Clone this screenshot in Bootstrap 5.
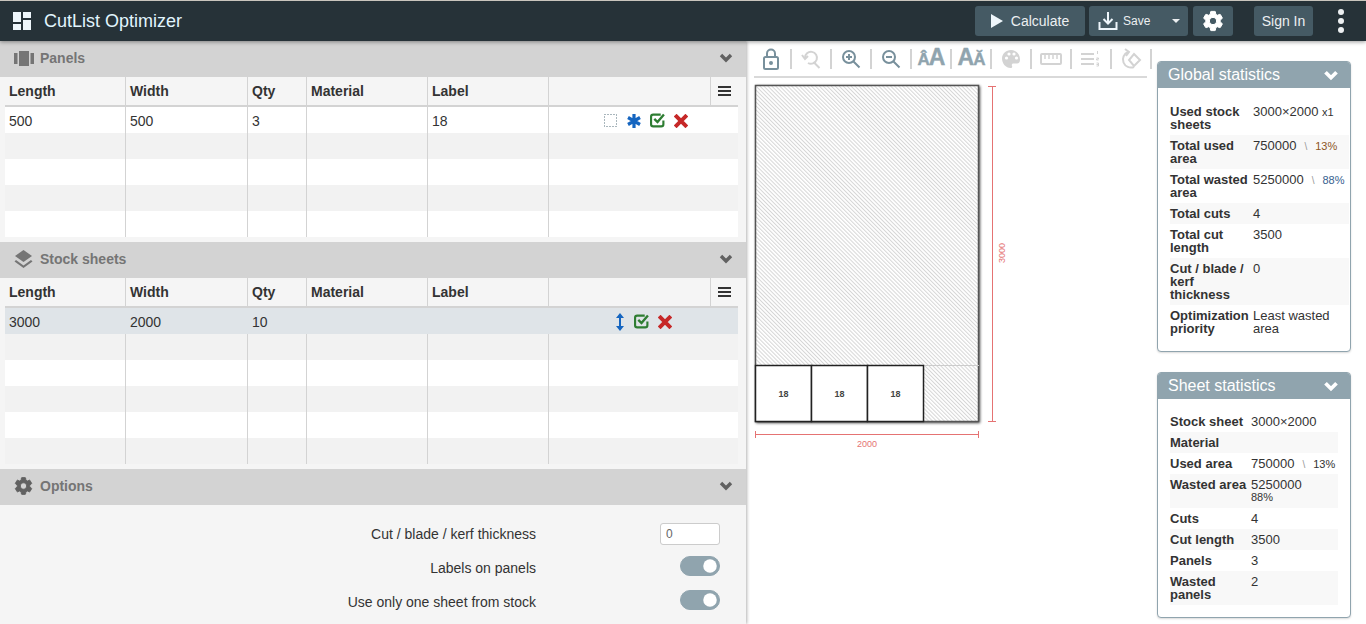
<!DOCTYPE html>
<html>
<head>
  <meta charset="UTF-8">
  <title>CutList Optimizer</title>
  <link rel="stylesheet" href="https://cdn.jsdelivr.net/npm/bootstrap@5.3.3/dist/css/bootstrap.min.css">
  <style>
    html, body { height: 624px; overflow: hidden; }
    body { font-family: "Liberation Sans", Arial, sans-serif; color: #333; background: #fff; font-size: 14px; }
    .top-bar { height: 41px; padding: 0; background: #263238; border-top: 1px solid #c9c5bd; flex-wrap: nowrap; position: relative; z-index: 3; box-shadow: 0 1px 4px rgba(0,0,0,.4); }
    .brand-name { font-size: 18px; color: #e1f5fe; margin-left: 13px; }
    .logo-mark { margin-left: 13px; }
    .bar-btn { background: #455a64; color: #eceff1; border: 0; border-radius: 3px; height: 30px; padding: 0; font-size: 14px; display: flex; align-items: center; justify-content: center; }
    .bar-btn:hover { background: #455a64; color: #eceff1; }
    .calc-btn { width: 110px; gap: 8px; }
    .save-btn { width: 99px; margin-left: 4px; justify-content: flex-start; padding-left: 9px; font-size: 12px; gap: 5px; }
    .save-btn .save-caret { width: 0; height: 0; border-left: 4px solid transparent; border-right: 4px solid transparent; border-top: 4px solid #eceff1; margin-left: 17px; }
    .gear-btn { width: 40px; margin-left: 5px; }
    .sign-btn { width: 59px; margin-left: 21px; }
    .kebab-btn { width: 8px; margin-left: 25px; margin-right: 20px; display: flex; flex-direction: column; gap: 3px; }
    .kebab-btn i { width: 6px; height: 6px; border-radius: 50%; background: #eceff1; display: block; }
    .work-area { height: 583px; }
    .left-pane { width: 746px; flex: none; background: #f5f5f5; box-shadow: 1px 0 3px rgba(0,0,0,.3); position: relative; z-index: 2; }
    .sect-head { height: 36px; background: #d3d3d3; color: #757575; font-weight: 700; font-size: 14px; padding: 0 13px 2px 13px; gap: 6px; }
    .sect-head .head-ico { width: 21px; display: flex; justify-content: center; }
    .sect-gap { height: 5px; }
    .cut-grid { width: 733px; margin: 0 0 0 5px; table-layout: fixed; font-size: 14px; border-collapse: separate; border-spacing: 0; --bs-table-bg: transparent; }
    .cut-grid.table > :not(caption) > * > * { padding: 1px 4px 0; height: 26px; border-bottom: 0; border-right: 1px solid #d3d3d3; color: #333; vertical-align: middle; box-shadow: none; background: transparent; line-height: 16px; }
    .cut-grid.table > :not(caption) > * > *:last-child { border-right: 0; }
    .cut-grid.table > thead > tr > th { height: 30px; padding: 0 4px; border-bottom: 2px solid #d3d3d3; background: #f5f5f5; }
    .cut-grid.table > tbody > tr:nth-child(odd) > td { background: #fff; }
    .cut-grid.table > tbody > tr:nth-child(even) > td { background: #f2f2f2; }
    .cut-grid.table > tbody > tr.row-active > td { background: #dfe4e8; border-right-color: #dfe4e8; }
    .cut-grid.table > thead { border: 0; }
    .cut-grid tbody { border-top: 0 !important; }
    .row-acts { gap: 9px; height: 16px; }
    .menu-lines { display: block; margin: 0 auto; }
    .opt-list { padding-top: 12px; }
    .opt-line { height: 34px; font-size: 14px; color: #333; }
    .opt-label { width: 536px; text-align: right; flex: none; }
    .opt-ctrl { width: 184px; flex: none; display: flex; justify-content: flex-end; }
    .kerf-input { width: 60px; height: 22px; padding: 0 5px; border: 1px solid #ccc; border-radius: 3px; font-size: 12px; color: #666; }
    .form-switch .form-check-input.opt-toggle { width: 40px; height: 20px; margin: 0 0 4px 0; float: none; background-color: #90a4ae; border-color: #90a4ae; }
    .mid-pane { width: 411px; flex: none; }
    .tool-strip { height: 35px; margin-left: 6px; padding-top: 5px; }
    .tool-cell { width: 38px; height: 19px; margin-top: 3px; display: flex; align-items: center; justify-content: center; }
    .tool-sep { width: 2px; height: 20px; margin-top: 3px; background: #d3d3d3; flex: none; }
    .aa-ico { color: #90a4ae; font-weight: 700; font-size: 23px; line-height: 19px; white-space: nowrap; letter-spacing: -1px; -webkit-text-stroke: .4px #90a4ae; }
    .aa-ico small { font-size: 17px; font-weight: 700; }
    .tool-rule { height: 2px; background: #d9d9d9; margin: 0 10px 0 8px; }
    .sheet-view { display: block; }
    .stats-col { width: 194px; flex: none; padding-top: 20px; gap: 20px; }
    .stat-card { border: 1px solid #90a4ae; border-radius: 4px; box-shadow: 0 1px 2px rgba(0,0,0,.15); }
    .stat-card .card-header { height: 26px; padding: 0 11px 0 10px; background: #90a4ae; color: #fff; font-size: 16px; border: 0; border-radius: 3px 3px 0 0; }
    .stat-card .card-body { padding: 13px 0 12px 12px; }
    .stat-card .card-body.slim-body { padding-top: 12px; }
    .stat-grid { font-size: 13px; line-height: 13px; table-layout: fixed; margin: 0; --bs-table-bg: transparent; }
    .stat-grid.table > :not(caption) > * > * { padding: 4px 0; border: 0; box-shadow: none; color: #333; background: transparent; vertical-align: top; }
    .stat-grid.table > tbody > tr:nth-child(even) > * { background: #f8f8f8; }
    .stat-grid th { font-weight: 700; }
    .grid-wide { width: 179px; }
    .grid-slim { width: 168px; }
    .tiny-val { font-size: 11px; line-height: 1; }
    .stack-val { display: block; line-height: 13px; }
    .slash-mark { color: #999; font-size: 10px; line-height: 1; margin: 0 8px 0 8px; }
    .used-pct { color: #8d5524; }
    .waste-pct { color: #37618f; }
  </style>
</head>
<body>
  <svg width="0" height="0" class="position-absolute">
    <symbol id="gear" viewBox="0 0 24 24"><path d="M19.14 12.94c.04-.3.06-.61.06-.94 0-.32-.02-.64-.07-.94l2.03-1.58c.18-.14.23-.41.12-.61l-1.92-3.32c-.12-.22-.37-.29-.59-.22l-2.39.96c-.5-.38-1.03-.7-1.62-.94l-.36-2.54c-.04-.24-.24-.41-.48-.41h-3.84c-.24 0-.43.17-.47.41l-.36 2.54c-.59.24-1.13.57-1.62.94l-2.39-.96c-.22-.08-.47 0-.59.22L2.74 8.87c-.12.21-.08.47.12.61l2.03 1.58c-.05.3-.09.63-.09.94s.02.64.07.94l-2.03 1.58c-.18.14-.23.41-.12.61l1.92 3.32c.12.22.37.29.59.22l2.39-.96c.5.38 1.03.7 1.62.94l.36 2.54c.05.24.24.41.48.41h3.84c.24 0 .44-.17.47-.41l.36-2.54c.59-.24 1.13-.56 1.62-.94l2.39.96c.22.08.47 0 .59-.22l1.92-3.32c.12-.22.07-.47-.12-.61l-2.01-1.58zM12 15.6c-1.98 0-3.6-1.62-3.6-3.6s1.62-3.6 3.6-3.6 3.6 1.62 3.6 3.6-1.62 3.6-3.6 3.6z" fill="currentColor" stroke="currentColor" stroke-width="1"/></symbol>
    <symbol id="chev" viewBox="0 0 14 10"><path d="M2 2l5 5 5-5" fill="none" stroke="currentColor" stroke-width="3.4"/></symbol>
    <symbol id="ok" viewBox="1 2 14 13"><path d="M13.5 8.500V12a2 2 0 0 1-2 2H4a2 2 0 0 1-2-2V5a2 2 0 0 1 2-2h7" fill="none" stroke="#2e7d32" stroke-width="2"/><path d="M5 7l3 3 6-7" fill="none" stroke="#2e7d32" stroke-width="2.2"/></symbol>
    <symbol id="del" viewBox="1 1 12 12"><path d="M2 2l10 10M12 2L2 12" fill="none" stroke="#c62828" stroke-width="3.4"/></symbol>
    <symbol id="lines" viewBox="0 0 13 10"><path d="M0 1h13M0 5h13M0 9h13" stroke="#333" stroke-width="2"/></symbol>
  </svg>

  <nav class="navbar top-bar d-flex align-items-center justify-content-start">
    <svg class="logo-mark" width="18" height="18" viewBox="0 0 18 18"><path d="M0 0h8v10H0zM0 12h8v6H0zM10 0h8v6h-8zM10 8h8v10h-8z" fill="#eef6fb"/></svg>
    <span class="brand-name">CutList Optimizer</span>
    <div class="d-flex align-items-center ms-auto">
      <button class="btn bar-btn calc-btn"><svg width="12" height="14" viewBox="0 0 12 14"><path d="M0 0l12 7-12 7z" fill="#eef6fb"/></svg>Calculate</button>
      <button class="btn bar-btn save-btn"><svg width="20" height="20" viewBox="0 0 20 20"><path d="M1.5 11v7h17v-7" fill="none" stroke="#eef6fb" stroke-width="2"/><path d="M10 1v11M5.5 8l4.500 4.500L14.500 8" fill="none" stroke="#eef6fb" stroke-width="2"/></svg>Save<span class="save-caret"></span></button>
      <button class="btn bar-btn gear-btn"><svg width="24" height="24" style="color:#fff"><use href="#gear"/></svg></button>
      <button class="btn bar-btn sign-btn">Sign In</button>
      <div class="kebab-btn"><i></i><i></i><i></i></div>
    </div>
  </nav>

  <div class="d-flex work-area">
    <div class="left-pane">
      <div class="sect-head d-flex align-items-center">
        <span class="head-ico"><svg width="20" height="15" viewBox="0 0 20 15"><path d="M0 2h3.500v11H0zM5 0h10v15H5zM16.500 2H20v11h-3.500z" fill="#757575"/></svg></span>
        <span>Panels</span>
        <svg class="ms-auto" width="14" height="10" style="color:#616161"><use href="#chev"/></svg>
      </div>
      <table class="table cut-grid">
        <colgroup><col style="width:121px"><col style="width:122px"><col style="width:59px"><col style="width:121px"><col style="width:121px"><col style="width:162px"><col style="width:27px"></colgroup>
        <thead><tr><th>Length</th><th>Width</th><th>Qty</th><th>Material</th><th>Label</th><th></th><th><svg class="menu-lines" width="13" height="10"><use href="#lines"/></svg></th></tr></thead>
        <tbody>
          <tr><td>500</td><td>500</td><td>3</td><td></td><td>18</td><td colspan="2">
            <div class="d-flex justify-content-center align-items-center row-acts ps-1">
              <svg width="14" height="14" viewBox="0 0 14 14"><rect x=".5" y=".5" width="12" height="12" fill="none" stroke="#546e7a" stroke-dasharray="1 2"/></svg>
              <svg width="14" height="14" viewBox="0 0 14 14"><path d="M7 0v14M1 3.500l12 7M13 3.500L1 10.500" stroke="#1565c0" stroke-width="3.200"/></svg>
              <svg width="15" height="15"><use href="#ok"/></svg>
              <svg width="14" height="14"><use href="#del"/></svg>
            </div></td></tr>
          <tr><td></td><td></td><td></td><td></td><td></td><td colspan="2"></td></tr>
          <tr><td></td><td></td><td></td><td></td><td></td><td colspan="2"></td></tr>
          <tr><td></td><td></td><td></td><td></td><td></td><td colspan="2"></td></tr>
          <tr><td></td><td></td><td></td><td></td><td></td><td colspan="2"></td></tr>
        </tbody>
      </table>
      <div class="sect-gap"></div>

      <div class="sect-head d-flex align-items-center">
        <span class="head-ico"><svg width="19" height="19" viewBox="0 0 19 19"><path d="M9.500 0l8.500 6-8.500 6L1 6z" fill="#757575"/><path d="M2 10l7.500 5.500L17 10l1.500 1.500-9 6.500-9-6.500z" fill="#757575"/></svg></span>
        <span>Stock sheets</span>
        <svg class="ms-auto" width="14" height="10" style="color:#616161"><use href="#chev"/></svg>
      </div>
      <table class="table cut-grid">
        <colgroup><col style="width:121px"><col style="width:122px"><col style="width:59px"><col style="width:121px"><col style="width:121px"><col style="width:162px"><col style="width:27px"></colgroup>
        <thead><tr><th>Length</th><th>Width</th><th>Qty</th><th>Material</th><th>Label</th><th></th><th><svg class="menu-lines" width="13" height="10"><use href="#lines"/></svg></th></tr></thead>
        <tbody>
          <tr class="row-active"><td>3000</td><td>2000</td><td>10</td><td></td><td></td><td colspan="2">
            <div class="d-flex justify-content-center align-items-center row-acts">
              <svg width="10" height="18" viewBox="0 0 10 18"><path d="M5 3v12" stroke="#1565c0" stroke-width="2"/><path d="M5 0l4 5H1zM5 18l4-5H1z" fill="#1565c0"/></svg>
              <svg width="15" height="15"><use href="#ok"/></svg>
              <svg width="14" height="14"><use href="#del"/></svg>
            </div></td></tr>
          <tr><td></td><td></td><td></td><td></td><td></td><td colspan="2"></td></tr>
          <tr><td></td><td></td><td></td><td></td><td></td><td colspan="2"></td></tr>
          <tr><td></td><td></td><td></td><td></td><td></td><td colspan="2"></td></tr>
          <tr><td></td><td></td><td></td><td></td><td></td><td colspan="2"></td></tr>
          <tr><td></td><td></td><td></td><td></td><td></td><td colspan="2"></td></tr>
        </tbody>
      </table>
      <div class="sect-gap"></div>

      <div class="sect-head d-flex align-items-center">
        <span class="head-ico"><svg width="24" height="24" style="color:#616161"><use href="#gear"/></svg></span>
        <span>Options</span>
        <svg class="ms-auto" width="14" height="10" style="color:#616161"><use href="#chev"/></svg>
      </div>
      <div class="opt-list">
        <div class="opt-line d-flex align-items-center"><span class="opt-label">Cut / blade / kerf thickness</span><span class="opt-ctrl"><input class="form-control kerf-input" type="text" value="0"></span></div>
        <div class="opt-line d-flex align-items-center"><span class="opt-label">Labels on panels</span><span class="opt-ctrl form-switch p-0"><input class="form-check-input opt-toggle" type="checkbox" role="switch" checked></span></div>
        <div class="opt-line d-flex align-items-center"><span class="opt-label">Use only one sheet from stock</span><span class="opt-ctrl form-switch p-0"><input class="form-check-input opt-toggle" type="checkbox" role="switch" checked></span></div>
      </div>
    </div>

    <div class="mid-pane">
      <div class="tool-strip d-flex">
        <div class="tool-cell"><svg width="18" height="22" viewBox="0 0 18 22" fill="none" stroke="#78909c" stroke-width="2"><rect x="2" y="9" width="14" height="12" rx="1.500"/><path d="M5 9V5.500a4 4 0 0 1 8 0V9"/><circle cx="9" cy="15" r="1" fill="#78909c"/></svg></div>
        <span class="tool-sep"></span>
        <div class="tool-cell"><svg width="20" height="20" viewBox="0 0 20 20" fill="none" stroke="#d3d3d3" stroke-width="2"><path d="M4 9a6 6 0 1 1 3 5"/><path d="M12.500 13l6 6"/><path d="M1 6l3 4 3-3"/></svg></div>
        <span class="tool-sep"></span>
        <div class="tool-cell"><svg width="20" height="20" viewBox="0 0 20 20" fill="none" stroke="#78909c" stroke-width="2"><circle cx="8" cy="8" r="6"/><path d="M12.500 12.500l6 6M5 8h6M8 5v6"/></svg></div>
        <span class="tool-sep"></span>
        <div class="tool-cell"><svg width="20" height="20" viewBox="0 0 20 20" fill="none" stroke="#78909c" stroke-width="2"><circle cx="8" cy="8" r="6"/><path d="M12.500 12.500l6 6M5 8h6"/></svg></div>
        <span class="tool-sep"></span>
        <div class="tool-cell"><span class="aa-ico"><small>Â</small>A</span></div>
        <span class="tool-sep"></span>
        <div class="tool-cell"><span class="aa-ico">A<small>Ă</small></span></div>
        <span class="tool-sep"></span>
        <div class="tool-cell"><svg width="20" height="20" viewBox="0 0 20 20"><path d="M10 1C5 1 1 4.800 1 9.500 1 14.500 5 19 9.500 19c1.500 0 2-1 1.500-2-.6-1.300 0-2.500 1.500-2.500H16c2 0 3-1.500 3-4C19 5 15 1 10 1z" fill="#d3d3d3"/><circle cx="5.500" cy="9" r="1.600" fill="#fff"/><circle cx="8" cy="5" r="1.600" fill="#fff"/><circle cx="13" cy="5" r="1.600" fill="#fff"/><circle cx="15.500" cy="9" r="1.600" fill="#fff"/></svg></div>
        <span class="tool-sep"></span>
        <div class="tool-cell"><svg width="22" height="12" viewBox="0 0 22 12" fill="none" stroke="#d3d3d3" stroke-width="2"><rect x="1" y="1" width="20" height="10" rx="1"/><path d="M5 2v4M9 2v4M13 2v4M17 2v4" stroke-width="1.500"/></svg></div>
        <span class="tool-sep"></span>
        <div class="tool-cell"><svg width="20" height="18" viewBox="0 0 20 18" fill="none" stroke="#d3d3d3"><path d="M0 4h13M0 9h13M0 14h13" stroke-width="2"/><path d="M16.500 1v3M15.500 8h2v1h-2v1h2M15.500 13h2v3h-2M15.500 14.500h2"/></svg></div>
        <span class="tool-sep"></span>
        <div class="tool-cell"><svg width="22" height="22" viewBox="0 0 22 22" fill="none" stroke="#d3d3d3" stroke-width="2"><path d="M8 4a8 8 0 1 0 6 15"/><path d="M5 1l4 3-3 4"/><path d="M14 7l6 6-6 6-5-6z" transform="translate(0 -1)"/></svg></div>
        <span class="tool-sep"></span>
      </div>
      <div class="tool-rule"></div>
      <svg class="sheet-view" width="300" height="380" viewBox="746 78 300 380">
        <defs>
          <pattern id="hatch" width="2.800" height="2.800" patternUnits="userSpaceOnUse" patternTransform="rotate(-45)"><rect width="2.800" height="2.800" fill="#fff"/><rect width="1" height="2.800" fill="#d6d6d6"/></pattern>
          <filter id="soft" x="-6%" y="-6%" width="112%" height="112%"><feGaussianBlur stdDeviation="1.800"/></filter>
        </defs>
        <rect x="756" y="86" width="224" height="337" fill="#000" opacity=".75" filter="url(#soft)"/>
        <rect x="755.500" y="85.500" width="223" height="336" fill="url(#hatch)" stroke="#555" stroke-width="1.500"/>
        <path d="M923 365.500h56" stroke="#ccc" stroke-width="1"/>
        <g fill="#fff" stroke="#222" stroke-width="1.500">
          <rect x="755.500" y="365.500" width="56" height="56"/>
          <rect x="811.500" y="365.500" width="56" height="56"/>
          <rect x="867.500" y="365.500" width="56" height="56"/>
        </g>
        <g font-family="Liberation Sans, Arial, sans-serif" font-size="9" font-weight="700" fill="#444" text-anchor="middle">
          <text x="783.500" y="397">18</text><text x="839.500" y="397">18</text><text x="895.500" y="397">18</text>
        </g>
        <path d="M988 86.500h8M992.500 86v335M988 421.500h8M755.500 431v7M755.500 434.500h223M978.500 431v7" stroke="#e57373" stroke-width="1" fill="none"/>
        <g font-family="Liberation Sans, Arial, sans-serif" font-size="9" fill="#e57373" text-anchor="middle">
          <text x="867" y="447">2000</text>
          <text transform="translate(1005 253) rotate(-90)">3000</text>
        </g>
      </svg>
    </div>

    <div class="stats-col d-flex flex-column">
      <div class="card stat-card">
        <div class="card-header d-flex align-items-center justify-content-between"><span>Global statistics</span><svg width="16" height="11" viewBox="0 0 14 10" style="color:#fff"><use href="#chev"/></svg></div>
        <div class="card-body">
          <table class="table stat-grid grid-wide">
            <colgroup><col style="width:83px"><col></colgroup>
            <tbody>
              <tr><th>Used stock sheets</th><td>3000×2000 <span class="tiny-val">x1</span></td></tr>
              <tr><th>Total used area</th><td>750000<span class="slash-mark">\</span><span class="tiny-val used-pct">13%</span></td></tr>
              <tr><th>Total wasted area</th><td>5250000<span class="slash-mark">\</span><span class="tiny-val waste-pct">88%</span></td></tr>
              <tr><th>Total cuts</th><td>4</td></tr>
              <tr><th>Total cut length</th><td>3500</td></tr>
              <tr><th>Cut / blade / kerf thickness</th><td>0</td></tr>
              <tr><th>Optimization priority</th><td>Least wasted area</td></tr>
            </tbody>
          </table>
        </div>
      </div>
      <div class="card stat-card">
        <div class="card-header d-flex align-items-center justify-content-between"><span>Sheet statistics</span><svg width="16" height="11" viewBox="0 0 14 10" style="color:#fff"><use href="#chev"/></svg></div>
        <div class="card-body slim-body">
          <table class="table stat-grid grid-slim">
            <colgroup><col style="width:81px"><col></colgroup>
            <tbody>
              <tr><th>Stock sheet</th><td>3000×2000</td></tr>
              <tr><th>Material</th><td></td></tr>
              <tr><th>Used area</th><td>750000<span class="slash-mark">\</span><span class="tiny-val">13%</span></td></tr>
              <tr><th>Wasted area</th><td>5250000<span class="tiny-val stack-val">88%</span></td></tr>
              <tr><th>Cuts</th><td>4</td></tr>
              <tr><th>Cut length</th><td>3500</td></tr>
              <tr><th>Panels</th><td>3</td></tr>
              <tr><th>Wasted panels</th><td>2</td></tr>
            </tbody>
          </table>
        </div>
      </div>
    </div>
  </div>
  <script src="https://cdn.jsdelivr.net/npm/bootstrap@5.3.3/dist/js/bootstrap.bundle.min.js"></script>
</body>
</html>
